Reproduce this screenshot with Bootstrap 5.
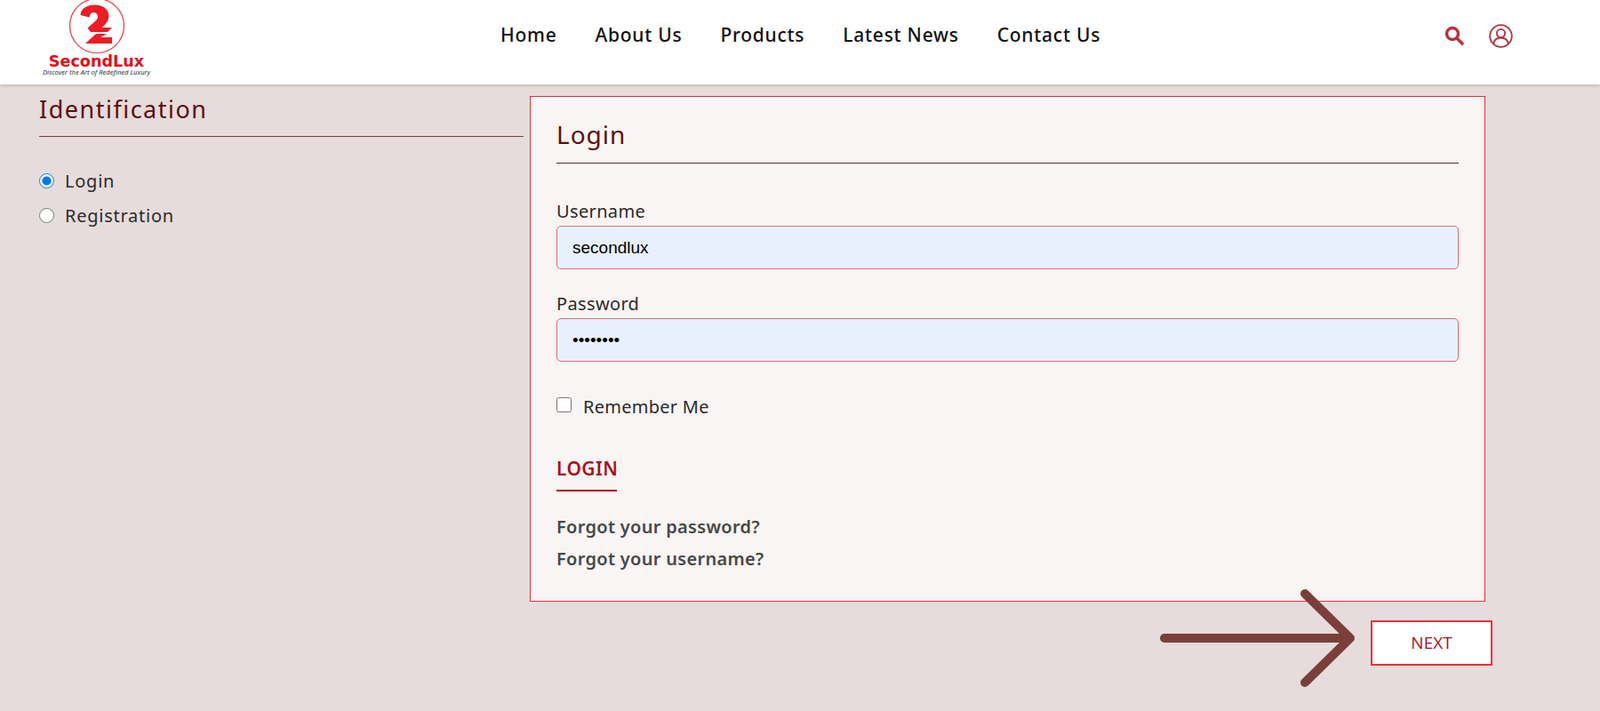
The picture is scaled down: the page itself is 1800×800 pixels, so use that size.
<!DOCTYPE html>
<html lang="en">
<head>
<meta charset="utf-8">
<title>SecondLux</title>
<link href="https://cdn.jsdelivr.net/npm/bootstrap@5.3.0/dist/css/bootstrap.min.css" rel="stylesheet">
<style>
html,body{height:800px;overflow:hidden}
body{background:#e6dcdb;font-family:"Noto Sans",sans-serif;color:#2b2b2b;font-size:20px}
.site-head{height:95px;background:#fff;box-shadow:0 1px 4px rgba(0,0,0,.2);padding:0 0 0 47px;position:relative}
.logo-box{width:123px;height:95px;position:relative;flex:none;text-align:center}
.logo-mark{display:block;margin:-4px auto 0 auto;width:66px;height:66px}
.logo-name{font-family:"DejaVu Sans",sans-serif;font-weight:700;color:#e3101c;font-size:17.6px;line-height:18px;margin-top:-2px;white-space:nowrap}
.logo-tag{font-family:"Noto Sans",sans-serif;font-style:italic;color:#333;font-size:7.6px;line-height:9px;white-space:nowrap;margin-left:-8px;margin-right:-8px;margin-top:-1px}
.main-links{margin-left:393px;gap:43px;margin-bottom:17px}
.main-links a{color:#111;font-size:21px;font-weight:500;text-decoration:none;padding:0;line-height:28px;letter-spacing:.75px}
.head-icons{margin-left:387px;gap:28px;color:#b5343c;margin-bottom:15px}
.body-row{padding-left:44px;margin-top:13px;gap:7px;position:relative}
.left-side{width:545px;flex:none}
.side-title,.box-title{color:#5c0f12;font-weight:400;margin:0}
.side-title{font-size:27px;line-height:30px;letter-spacing:1.5px;height:46px;border-bottom:1px solid #7d3c3c}
.opt-list{margin-top:36px}
.opt-list .form-check{min-height:0;margin-bottom:11px;padding-left:29px;line-height:28px;height:28px}
.opt-list .form-check-input{appearance:auto;-webkit-appearance:auto;background:none;border:0;margin-left:-29px;width:17px;height:17px;margin-top:5px;box-shadow:none}
.opt-list label{font-size:20px;letter-spacing:.75px}
.login-box{width:1075px;height:569px;flex:none;background:#f9f5f4;border:1px solid #e0323c;padding:22px 29px 0 29px}
.box-title{font-size:28px;line-height:40px;letter-spacing:1px;height:53px;border-bottom:1px solid #5c2a2a}
.fld-label{font-size:20px;line-height:28px;margin:0;display:block;letter-spacing:.35px}
.fld-input.form-control{height:49px;background:#e8f0fe;border:1px solid #dc6c78;border-radius:5px;padding:0 17px;font-family:"Liberation Sans",sans-serif;font-size:19px;color:#000;box-shadow:none}
.first-fld{margin-top:40px}
.second-fld{margin-top:25px}
.second-fld .fld-label{margin-bottom:2px}
.first-fld .fld-label{margin-bottom:2px}
.rem-row{margin-top:36px;height:30px}
.rem-row .form-check-input{appearance:auto;-webkit-appearance:auto;background:none;border:0;width:17px;height:17px;margin:-6px 0 0 0;box-shadow:none}
.rem-row label{font-size:20px;line-height:28px;margin-left:13px;letter-spacing:.27px}
.login-link{display:inline-block;color:#a8121b;font-weight:600;font-size:21px;line-height:30px;text-decoration:none;border-bottom:2px solid #a8121b;padding-bottom:9px;margin-top:39px;width:68px;white-space:nowrap;letter-spacing:.4px}
.forgot{color:#484848;font-weight:600;font-size:20px;text-decoration:none;line-height:28px;display:block;letter-spacing:.3px}
.forgot-a{margin-top:26px}
.forgot-b{margin-top:8px}
.step-row{padding-right:121px;margin-top:21px;position:relative}
.next-btn.btn{width:137px;height:51px;background:#fff;border:2px solid #f0303c;border-radius:0;color:#a8121b;font-family:"Open Sans",sans-serif;font-size:19px;line-height:1;display:flex;align-items:center;justify-content:center;padding:0}
.big-arrow{position:absolute;left:1300px;top:-36px}
</style>
</head>
<body>
<header class="site-head d-flex align-items-center">
  <a class="logo-box d-block text-decoration-none" href="#">
    <svg class="logo-mark" viewBox="0 0 66 66" aria-hidden="true">
      <circle cx="33" cy="33" r="30.5" fill="#fff" stroke="#e8383f" stroke-width="1.2"/>
      <path fill="#ee1c25" d="M14.5 21C15 13.5 22 9.5 30.5 9.5C40 9.5 46.5 14.5 46.5 22C46.5 28 42.5 31 39 35L50 35L45 40L26 40L22.5 35.5L31 28C33.5 25.5 34 24.5 34 23C34 20 32 18 29.5 18C26.5 18 25 20 24.5 23.5Z"/>
      <path fill="#ee1c25" d="M20 53L32 42L44 42L37 46L50 46L50 53Z"/>
    </svg>
    <div class="logo-name">SecondLux</div>
    <div class="logo-tag">Discover the Art of Redefined Luxury</div>
  </a>
  <nav class="nav main-links flex-nowrap">
    <a class="nav-link" href="#">Home</a>
    <a class="nav-link" href="#">About Us</a>
    <a class="nav-link" href="#">Products</a>
    <a class="nav-link" href="#">Latest News</a>
    <a class="nav-link" href="#">Contact Us</a>
  </nav>
  <div class="head-icons d-flex align-items-center">
    <svg width="22" height="22" viewBox="0 0 22 22" fill="none" stroke="currentColor" aria-label="Search"><circle cx="9" cy="9" r="6.5" stroke-width="3.4"/><path d="M14 14l6 6" stroke-width="3.6" stroke-linecap="round"/></svg>
    <svg width="27" height="27" viewBox="0 0 27 27" fill="none" stroke="currentColor" stroke-width="1.8" aria-label="Account"><circle cx="13.5" cy="13.5" r="12.3"/><circle cx="13.5" cy="10.5" r="4.6"/><path d="M5.2 22.5C5.8 17.5 9 15.5 13.5 15.5S21.2 17.5 21.8 22.5"/></svg>
  </div>
</header>

<main>
  <div class="body-row d-flex align-items-start">
    <section class="left-side">
      <h2 class="side-title">Identification</h2>
      <div class="opt-list">
        <div class="form-check">
          <input class="form-check-input" type="radio" name="mode" id="optLogin" checked>
          <label class="form-check-label" for="optLogin">Login</label>
        </div>
        <div class="form-check">
          <input class="form-check-input" type="radio" name="mode" id="optReg">
          <label class="form-check-label" for="optReg">Registration</label>
        </div>
      </div>
    </section>
    <section class="login-box">
      <h2 class="box-title">Login</h2>
      <div class="first-fld">
        <label class="fld-label" for="user">Username</label>
        <input class="form-control fld-input" id="user" type="text" value="secondlux">
      </div>
      <div class="second-fld">
        <label class="fld-label" for="pass">Password</label>
        <input class="form-control fld-input" id="pass" type="password" value="12345678">
      </div>
      <div class="rem-row d-flex align-items-center">
        <input class="form-check-input" type="checkbox" id="rem">
        <label for="rem">Remember Me</label>
      </div>
      <a class="login-link" href="#">LOGIN</a>
      <a class="forgot forgot-a" href="#">Forgot your password?</a>
      <a class="forgot forgot-b" href="#">Forgot your username?</a>
    </section>
  </div>
  <div class="step-row d-flex justify-content-end">
    <svg class="big-arrow" width="236" height="112" viewBox="0 0 236 112" fill="none" stroke="#7a3f3a" stroke-width="10" stroke-linecap="round" stroke-linejoin="round" aria-hidden="true"><path d="M10 56H219M168 6L219 56L168 106"/></svg>
    <a class="btn next-btn" href="#">NEXT</a>
  </div>
</main>
<script src="https://cdn.jsdelivr.net/npm/bootstrap@5.3.0/dist/js/bootstrap.bundle.min.js"></script>
</body>
</html>
